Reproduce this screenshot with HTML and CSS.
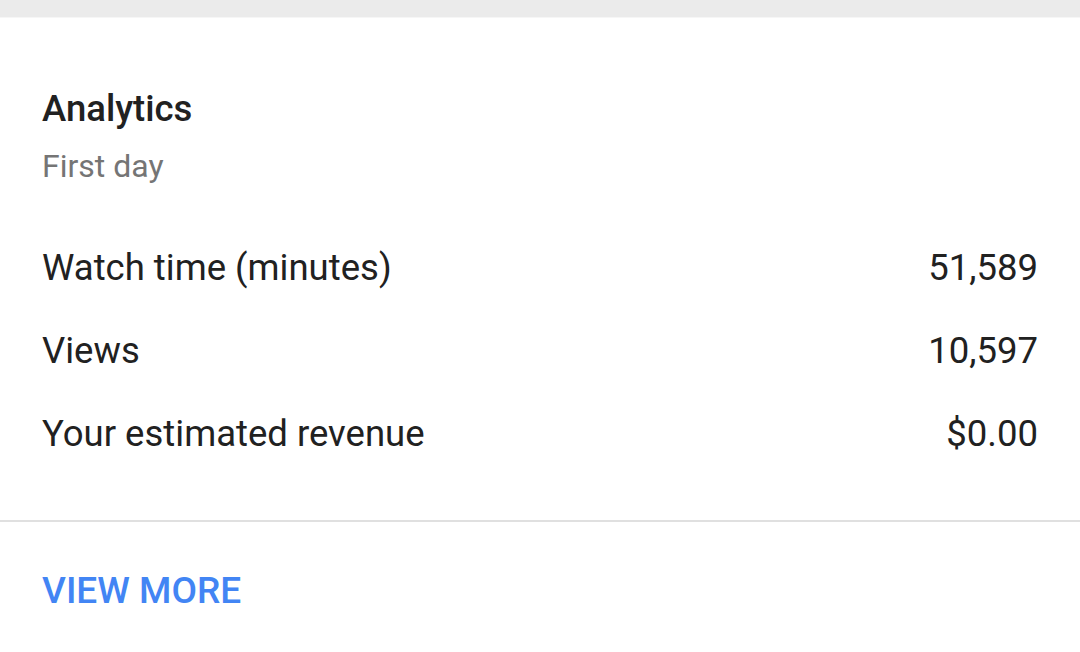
FILE: index.html
```html
<!DOCTYPE html>
<html>
<head>
<meta charset="utf-8">
<link rel="stylesheet" href="styles.css">
</head>
<body>
<div class="topbar"></div>
<section class="card">
  <div class="card-body">
    <h2 class="title">Analytics</h2>
    <div class="subtitle">First day</div>
    <ul class="stats">
      <li class="stat"><span class="label">Watch time (minutes)</span><span class="value">51,589</span></li>
      <li class="stat"><span class="label">Views</span><span class="value">10,597</span></li>
      <li class="stat"><span class="label">Your estimated revenue</span><span class="value">$0.00</span></li>
    </ul>
  </div>
  <div class="card-footer">
    <a class="more" href="#">VIEW MORE</a>
  </div>
</section>
</body>
</html>
```
FILE: styles.css
```css
html, body {
  margin: 0;
  padding: 0;
  background: #ffffff;
  font-family: Roboto, "Noto Sans", sans-serif;
}
.topbar {
  height: 17px;
  background: #ebebeb;
  border-bottom: 1px solid #f6f6f6;
}
.card {
  background: #ffffff;
}
.card-body {
  padding: 71px 42px 45px 42px;
  border-bottom: 2px solid #e0e0e0;
}
.title {
  margin: 0;
  font-size: 36.5px;
  line-height: 40px;
  font-weight: 500;
  color: #212121;
}
.subtitle {
  margin-top: 17px;
  font-size: 32px;
  line-height: 40px;
  color: #757575;
}
.stats {
  list-style: none;
  margin: 40px 0 0;
  padding: 0;
}
.stat {
  display: flex;
  justify-content: space-between;
  align-items: center;
  height: 83px;
  font-size: 36.5px;
  color: #212121;
}
.card-footer {
  padding: 49px 42px 0;
}
.more {
  display: inline-block;
  font-size: 37px;
  line-height: 40px;
  font-weight: 500;
  color: #4285f4;
  text-decoration: none;
}
```
